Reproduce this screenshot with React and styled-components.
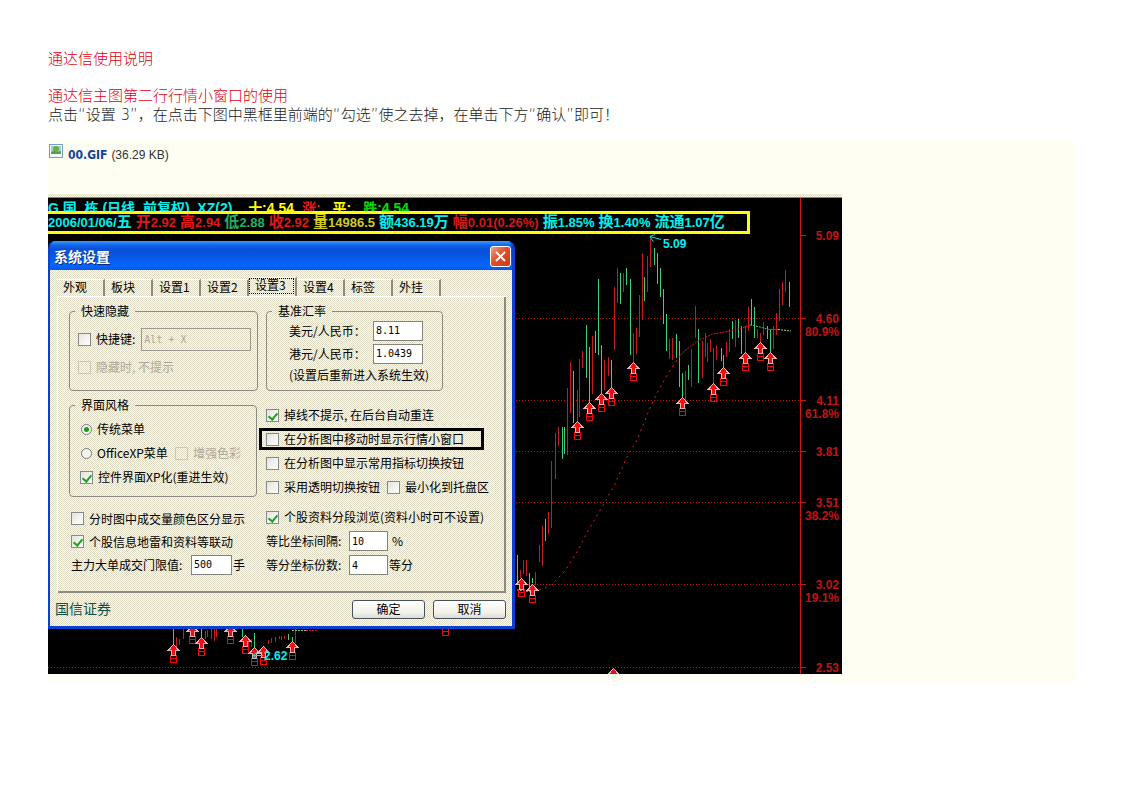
import { useState } from "react";
import styled, { createGlobalStyle, css } from "styled-components";

const GlobalStyle = createGlobalStyle`
  * {
    box-sizing: border-box;
  }

  body {
    margin: 0;
    background: #fff;
    font-family: "Noto Sans CJK SC", sans-serif;
    font-size: 12px;
  }

  input,
  button {
    margin: 0;
    font: inherit;
  }
`;

const dither = css`
  background: repeating-conic-gradient(#fbfaf4 0 25%, #dfdbc5 0 50%) 0 0 / 2px
    2px;
`;

const Page = styled.main`
  padding: 48px 46px 48px 48px;
`;

const Title = styled.h1`
  margin: 0 0 17px;
  font-size: 15px;
  font-weight: 300;
  line-height: 20px;
  color: #e00010;
`;

const Subtitle = styled.h2`
  margin: 0;
  font-size: 15px;
  font-weight: 300;
  line-height: 20px;
  color: #e00010;
`;

const Paragraph = styled.p`
  margin: 0 0 17px;
  font-family: "DejaVu Sans", "Noto Sans CJK SC", sans-serif;
  font-size: 15px;
  font-weight: 300;
  line-height: 20px;
  color: #222;
`;

const Attachment = styled.section`
  padding-bottom: 8px;
  background: #fefff2;
`;

const FileRow = styled.div`
  display: flex;
  gap: 4px;
  height: 52px;
  padding: 2px 0 0 1px;
  font-family: "Liberation Sans", sans-serif;
  font-size: 12px;
  line-height: 22px;
  color: #333;
`;

const FileLink = styled.a`
  margin-left: 1px;
  font-family: "DejaVu Sans Condensed", "DejaVu Sans", sans-serif;
  font-size: 12px;
  font-weight: bold;
  color: #10449a;
  text-decoration: none;
`;

// chart and window share one grid cell so that the window lies on the chart
const Screen = styled.div`
  display: grid;
  width: 100%;
  max-width: 794px;
  overflow: hidden;
  background: #000;

  > * {
    grid-area: 1 / 1;
    min-width: 0;
  }
`;

const ChartSvg = styled.svg`
  display: block;
  font-family: "Liberation Sans", sans-serif;
  font-size: 12px;
  font-weight: bold;
`;

const Overlay = styled.div`
  padding-bottom: 45px;
`;

const TopStrip = styled.div`
  height: 4px;
  border-bottom: 1px solid #8a8a80;
  ${dither}
`;

const QuoteText = styled.div`
  display: flex;
  white-space: nowrap;
  font-family: "Liberation Sans", "Noto Sans CJK SC", sans-serif;
  font-size: 13px;
  font-weight: bold;
`;

const HeadLine = styled(QuoteText)`
  gap: 8px;
  height: 13px;
  overflow: hidden;
  font-size: 14px;
  line-height: 20px;
`;

const QuoteFrame = styled(QuoteText)`
  gap: 4px;
  width: 702px;
  max-width: 100%;
  height: 23px;
  border: 3px solid #ff0;
  border-left: none;
  background: #000;
  line-height: 15px;
`;

const Quote = styled.span`
  color: ${(props) => props.$color};
  white-space: pre;
`;

const Han = styled.span`
  font-size: 15px;
`;

const Window = styled.section`
  width: 467px;
  max-width: 100%;
  margin-top: 7px;
  border: solid #0a3fd0;
  border-width: 0 3px 3px 2px;
  border-radius: 7px 7px 0 0;
  background: #0a3fd0;
  overflow: hidden;
  color: #000;
`;

const TitleBar = styled.header`
  display: flex;
  align-items: center;
  justify-content: space-between;
  height: 29px;
  padding: 1px 1px 0 4px;
  background: linear-gradient(
    #3c98ff 0,
    #1268ee 4px,
    #0a4fd8 8px,
    #0858e4 16px,
    #0566fb 24px,
    #0558e8 29px
  );
`;

const WindowTitle = styled.h3`
  margin: 0;
  font-size: 14px;
  line-height: 18px;
  color: #fff;
  text-shadow: 1px 1px #0a2a80;
`;

const CloseButton = styled.button`
  display: flex;
  align-items: center;
  justify-content: center;
  width: 21px;
  height: 21px;
  padding: 0;
  border: 1px solid #fff;
  border-radius: 3px;
  background: linear-gradient(135deg, #f0a088, #e0502c 45%, #c43c14);
`;

const WindowBody = styled.div`
  padding: 7px 6px 0 7px;
  ${dither}
`;

const TabList = styled.div`
  display: flex;
  align-items: flex-end;
`;

const Tab = styled.button`
  width: 48px;
  height: ${(props) => (props.$active ? "19px" : "17px")};
  padding: 0 1px 2px 0;
  border: none;
  border-top: 1px solid #fff;
  border-right: 2px solid #8d8b80;
  background: none;
  text-align: left;
  line-height: 14px;

  span {
    display: block;
    height: 16px;
    padding-left: 5px;
    border: 1px dotted ${(props) => (props.$active ? "#000" : "transparent")};
    line-height: 12px;
  }
`;

const Sheet = styled.form`
  display: flex;
  gap: 2px;
  padding: 6px 0 16px 11px;
  border: solid #fff;
  border-width: 1px 0 0 1px;
  box-shadow: inset -2px -2px #8d8b80;
`;

const LeftColumn = styled.div`
  width: 188px;
`;

const RightColumn = styled.div`
  flex: 1;
`;

const Group = styled.fieldset`
  width: ${(props) => props.$width};
  height: ${(props) => props.$height};
  margin: ${(props) => props.$margin || "0"};
  padding: 0 5px 0 ${(props) => props.$indent || "10px"};
  border: 1px solid #8d8b80;
  border-radius: 4px;
`;

const Legend = styled.legend`
  margin-left: ${(props) => props.$shift || "-5px"};
  padding: 0 6px;
  line-height: 16px;
`;

const Row = styled.div`
  display: flex;
  align-items: center;
  height: ${(props) => props.$height || "24px"};
  padding-left: ${(props) => props.$indent || "0"};
  line-height: 16px;
  white-space: nowrap;
`;

const LowerRows = styled.div`
  padding: 10px 0 0 2px;
`;

const CheckRows = styled.div`
  padding: ${(props) => props.$top} 0 0;
`;

const Marked = styled.div`
  display: flex;
  align-items: center;
  width: 225px;
  height: 22px;
  margin: 1px 0;
  padding-left: 4px;
  border: 3px solid #000;
`;

const CheckLabel = styled.label`
  display: flex;
  align-items: center;
  gap: 5px;
  color: ${(props) => (props.$disabled ? "#aca899" : "#000")};
  white-space: nowrap;
  line-height: 16px;

  & + & {
    margin-left: 7px;
  }
`;

const CheckBox = styled.input`
  appearance: none;
  flex: none;
  width: 13px;
  height: 13px;
  border: 1px solid #858a8c;
  background: linear-gradient(135deg, #e4e4dc, #fff);

  &:checked::after {
    content: "";
    display: block;
    width: 4px;
    height: 7px;
    margin: 1px 0 0 3px;
    border: solid #21a121;
    border-width: 0 2px 2px 0;
    transform: rotate(40deg);
  }

  &:disabled {
    border-color: #cac8bb;
    background: none;
  }
`;

const Radio = styled.input`
  appearance: none;
  flex: none;
  width: 11px;
  height: 11px;
  margin: 0 0 0 1px;
  border: 1px solid #777c7c;
  border-radius: 50%;
  background: #f4f4ec;

  &:checked::after {
    content: "";
    display: block;
    width: 5px;
    height: 5px;
    margin: 2px;
    border-radius: 50%;
    background: #1a9a1a;
  }
`;

const FieldLabel = styled.label`
  width: ${(props) => props.$width};
`;

const TextBox = styled.input`
  width: ${(props) => props.$width};
  height: 20px;
  margin-right: ${(props) => props.$after || "1px"};
  padding: 0 0 0 2px;
  border: 1px solid #85857c;
  border-radius: 0;
  background: #fff;
  font-family: "DejaVu Sans Mono", monospace;
  font-size: 10px;

  &:disabled {
    height: 23px;
    margin-left: 6px;
    border: 1px solid #9d9b90;
    background: none;
    color: #aca899;
  }
`;

const Footer = styled.footer`
  display: flex;
  align-items: flex-start;
  gap: 8px;
  height: 33px;
  padding-top: 7px;
`;

const Broker = styled.span`
  flex: 1;
  margin-left: -2px;
  font-size: 14px;
  line-height: 16px;
  color: #0c524c;
`;

const PushButton = styled.button`
  width: 73px;
  height: 19px;
  padding: 0 0 2px;
  border: 1px solid #45525c;
  border-radius: 3px;
  background: linear-gradient(#fff, #f2f1ea 70%, #dddbd2);
  line-height: 15px;
`;

const RED = "#c41c1c";
const GREEN = "#3ecf80";

// x, high, low
const falling = [
  [125, 435, 450], [153, 435, 443], [194, 435, 443], [206, 439, 454],
  [240, 440, 446], [244, 443, 448], [469, 361, 388], [481, 379, 393],
  [484, 384, 389], [497, 325, 347], [514, 233, 265], [516, 233, 260],
  [525, 177, 229], [538, 131, 184], [541, 153, 208], [547, 137, 159],
  [550, 85, 161], [553, 151, 199], [563, 166, 194], [572, 79, 110],
  [578, 74, 91], [582, 85, 161], [596, 83, 107], [606, 54, 71],
  [609, 59, 90], [612, 74, 103], [615, 95, 130], [618, 120, 157],
  [628, 140, 164], [631, 147, 193], [634, 179, 203], [640, 171, 186],
  [650, 135, 189], [673, 154, 167], [675, 161, 173], [684, 127, 145],
  [690, 125, 144], [693, 132, 160], [703, 105, 131], [706, 113, 144],
  [719, 132, 145], [722, 135, 158], [741, 88, 113],
];

const rising = [
  [128, 443, 454], [131, 445, 451], [135, 435, 445], [157, 437, 445],
  [159, 436, 443], [163, 435, 445], [166, 435, 447], [168, 435, 443],
  [200, 444, 455], [203, 445, 453], [220, 446, 450], [223, 444, 449],
  [227, 443, 448], [231, 442, 445], [233, 442, 446], [236, 442, 445],
  [247, 435, 449], [472, 376, 384], [475, 366, 380], [478, 366, 382],
  [487, 378, 391], [491, 351, 368], [494, 332, 372], [500, 318, 340],
  [503, 267, 334], [507, 239, 285], [510, 233, 252], [519, 194, 261],
  [522, 168, 219], [529, 196, 228], [531, 165, 223], [534, 157, 174],
  [544, 142, 200], [556, 166, 196], [560, 163, 182], [566, 93, 156],
  [569, 74, 109], [575, 79, 98], [585, 139, 168], [588, 134, 160],
  [591, 101, 143], [594, 59, 126], [599, 62, 98], [602, 45, 73],
  [621, 145, 165], [624, 144, 166], [637, 177, 206], [643, 155, 193],
  [647, 112, 144], [654, 147, 184], [657, 139, 163], [659, 149, 168],
  [662, 145, 158], [665, 154, 189], [668, 152, 166], [678, 148, 163],
  [681, 135, 158], [687, 126, 153], [697, 132, 158], [700, 113, 137],
  [709, 135, 144], [712, 139, 148], [715, 128, 141], [725, 132, 155],
  [728, 119, 141], [731, 95, 127], [734, 88, 111], [737, 76, 98],
];

const buys = [
  [125, 450], [144, 431], [153, 443], [182, 431], [197, 441], [206, 453],
  [215, 452], [244, 447], [397, 423], [473, 384], [484, 390], [529, 227],
  [541, 208], [553, 199], [563, 193], [585, 168], [634, 203], [665, 189],
  [675, 173], [697, 158], [712, 148], [722, 158], [565, 474],
];

const levels = [
  { y: 41, price: "5.09", noLine: true },
  { y: 124, price: "4.60", percent: "80.9%" },
  { y: 206, price: "4.11", percent: "61.8%" },
  { y: 257, price: "3.81" },
  { y: 308, price: "3.51", percent: "38.2%" },
  { y: 390, price: "3.02", percent: "19.1%" },
  { y: 473, price: "2.53" },
];

const headline = [
  ["G 国  栋 (日线  前复权)  XZ(2)  ", "#00f0f0"],
  ["十:4.54", "#ff0"],
  ["涨:.", "#f01818"],
  ["平:.", "#ff0"],
  ["跌:4.54", "#00e000"],
];

const quotes = [
  { value: "2006/01/06/", unit: "五", color: "#00f0f0" },
  { name: "开", value: "2.92", color: "#e01818" },
  { name: "高", value: "2.94", color: "#e01818" },
  { name: "低", value: "2.88", color: "#22b066" },
  { name: "收", value: "2.92", color: "#e01818" },
  { name: "量", value: "14986.5", color: "#d2cc20" },
  { name: "额", value: "436.19", unit: "万", color: "#00f0f0" },
  { name: "幅", value: "0.01(0.26%)", color: "#d01818" },
  { name: "振", value: "1.85%", color: "#00f0f0" },
  { name: "换", value: "1.40%", color: "#00f0f0" },
  { name: "流通", value: "1.07", unit: "亿", color: "#00f0f0" },
];

const tabs = ["外观", "板块", "设置1", "设置2", "设置3", "设置4", "标签", "外挂"];

const BuyMark = ({ x, y }) => (
  <g transform={`translate(${x} ${y})`}>
    <path
      d="M-2.5 11.5 H3.5 V18.5 H-2.5 Z M-2.5 14.5 H3.5"
      fill="none"
      stroke="#f00808"
    />
    <path
      d="M.5 .5 L5.5 6 H2.5 V11 H-1.5 V6 H-4.5 Z"
      fill="#f01010"
      stroke="#f0b0b0"
    />
  </g>
);

const Chart = () => (
  <ChartSvg
    width="100%"
    height="480"
    viewBox="0 0 794 480"
    preserveAspectRatio="xMinYMin slice"
    shapeRendering="crispEdges"
    aria-hidden="true"
  >
    <rect x="752" y="4" width="1" height="476" fill="#d01414" />
    {levels.map((level) => (
      <g key={level.price} fill="#c01414">
        {!level.noLine && (
          <path
            d={`M0 ${level.y}.5 H752`}
            stroke="#c41414"
            strokeDasharray="1 2"
          />
        )}
        <path d={`M753 ${level.y}.5 H758`} stroke="#d01414" />
        <text x="791" y={level.y + 5} textAnchor="end">
          {level.price}
        </text>
        {level.percent && (
          <text x="791" y={level.y + 18} textAnchor="end">
            {level.percent}
          </text>
        )}
      </g>
    ))}
    {rising.map(([x, high, low]) => (
      <rect key={x} x={x} y={high} width="1" height={low - high} fill={RED} />
    ))}
    {falling.map(([x, high, low]) => (
      <rect key={x} x={x} y={high} width="1" height={low - high} fill={GREEN} />
    ))}
    <g fill="none" shapeRendering="auto">
      <path
        d="M491 396 Q499 394 504 390 L517 377 L529 358 L541 335 L557 308 L566 292 L579 263 L589 246 L602 214 L610 197 L621 178 L631 163"
        stroke="#e02020"
        strokeDasharray="2 4"
      />
      <path
        d="M631 163 Q644 148 665 140 L682 137 L694 134 L702 131"
        stroke="#e02020"
        strokeDasharray="2 1"
      />
      <path d="M702 131 L712 133 L719 135" stroke="#30d030" strokeDasharray="2 1" />
      <path d="M719 135.5 H730" stroke="#d02020" />
      <path d="M730 135.5 L743 137" stroke="#a0d830" strokeDasharray="2 1" />
      <path d="M469 396 L484 398" stroke="#60d030" strokeDasharray="2 1" />
      <path d="M244 436.5 H258" stroke="#80d030" strokeDasharray="2 1" />
      <path d="M258 436.5 H269" stroke="#d02020" strokeDasharray="2 1" />
    </g>
    {buys.map(([x, y]) => (
      <BuyMark key={x} x={x} y={y} />
    ))}
    <path
      d="M602 42.5 L613 45.5 M602 42.5 L607 40.5 M602 42.5 L605 47.5 M205 461.5 H215 M205 461.5 L209 458.5 M205 461.5 L209 464.5"
      fill="none"
      stroke="#00e8e8"
      shapeRendering="auto"
    />
    <text x="615" y="54" fill="#00f0f0">
      5.09
    </text>
    <text x="216" y="466" fill="#00f0f0">
      2.62
    </text>
  </ChartSvg>
);

// eslint-disable-next-line react/prop-types
const Check = ({ label, checked, disabled }) => (
  <CheckLabel $disabled={disabled}>
    <CheckBox type="checkbox" defaultChecked={checked} disabled={disabled} />
    {label}
  </CheckLabel>
);

const SettingsWindow = () => {
  const [active, setActive] = useState("设置3");

  return (
    <Window aria-label="系统设置">
      <TitleBar>
        <WindowTitle>系统设置</WindowTitle>
        <CloseButton type="button" aria-label="关闭">
          <svg width="13" height="13" viewBox="0 0 13 13">
            <path d="M2 2 L11 11 M11 2 L2 11" stroke="#fff" strokeWidth="2" />
          </svg>
        </CloseButton>
      </TitleBar>
      <WindowBody>
        <TabList role="tablist">
          {tabs.map((tab) => (
            <Tab
              key={tab}
              type="button"
              role="tab"
              aria-selected={tab === active}
              $active={tab === active}
              onClick={() => setActive(tab)}
            >
              <span>{tab}</span>
            </Tab>
          ))}
        </TabList>
        <Sheet>
          <LeftColumn>
            <Group $width="188px" $height="88px" $indent="8px">
              <Legend $shift="-3px">快速隐藏</Legend>
              <CheckRows $top="8px">
                <Row>
                  <Check label="快捷键:" />
                  <TextBox
                    $width="110px"
                    defaultValue="Alt + X"
                    aria-label="快捷键"
                    disabled
                  />
                </Row>
                <Row $height="32px">
                  <Check label="隐藏时, 不提示" disabled />
                </Row>
              </CheckRows>
            </Group>
            <Group $width="188px" $height="100px" $margin="6px 0 0">
              <Legend>界面风格</Legend>
              <CheckRows $top="4px">
                <Row>
                  <CheckLabel>
                    <Radio type="radio" name="style" defaultChecked />
                    传统菜单
                  </CheckLabel>
                </Row>
                <Row>
                  <CheckLabel>
                    <Radio type="radio" name="style" />
                    OfficeXP菜单
                  </CheckLabel>
                  <Check label="增强色彩" disabled />
                </Row>
                <Row>
                  <Check label="控件界面XP化(重进生效)" checked />
                </Row>
              </CheckRows>
            </Group>
            <LowerRows>
              <Row $height="23px">
                <Check label="分时图中成交量颜色区分显示" />
              </Row>
              <Row $height="23px">
                <Check label="个股信息地雷和资料等联动" checked />
              </Row>
              <Row $height="23px">
                <FieldLabel htmlFor="limit" $width="120px">
                  主力大单成交门限值:
                </FieldLabel>
                <TextBox id="limit" $width="41px" defaultValue="500" />手
              </Row>
            </LowerRows>
          </LeftColumn>
          <RightColumn>
            <Group
              $width="177px"
              $height="88px"
              $margin="0 0 0 7px"
              $indent="22px"
            >
              <Legend $shift="-17px">基准汇率</Legend>
              <Row $height="23px">
                <FieldLabel htmlFor="usd" $width="84px">
                  美元/人民币：
                </FieldLabel>
                <TextBox id="usd" $width="50px" defaultValue="8.11" />
              </Row>
              <Row $height="23px">
                <FieldLabel htmlFor="hkd" $width="84px">
                  港元/人民币：
                </FieldLabel>
                <TextBox id="hkd" $width="50px" defaultValue="1.0439" />
              </Row>
              <Row $height="20px">(设置后重新进入系统生效)</Row>
            </Group>
            <CheckRows $top="12px">
              <Row $indent="7px">
                <Check label="掉线不提示, 在后台自动重连" checked />
              </Row>
              <Marked>
                <Check label="在分析图中移动时显示行情小窗口" />
              </Marked>
              <Row $indent="7px">
                <Check label="在分析图中显示常用指标切换按钮" />
              </Row>
              <Row $indent="7px">
                <Check label="采用透明切换按钮" />
                <Check label="最小化到托盘区" />
              </Row>
            </CheckRows>
            <CheckRows $top="6px">
              <Row $indent="7px">
                <Check label="个股资料分段浏览(资料小时可不设置)" checked />
              </Row>
              <Row $indent="7px">
                <FieldLabel htmlFor="gap" $width="83px">
                  等比坐标间隔:
                </FieldLabel>
                <TextBox
                  id="gap"
                  $width="39px"
                  $after="4px"
                  defaultValue="10"
                />
                %
              </Row>
              <Row $indent="7px">
                <FieldLabel htmlFor="parts" $width="83px">
                  等分坐标份数:
                </FieldLabel>
                <TextBox id="parts" $width="39px" defaultValue="4" />
                等分
              </Row>
            </CheckRows>
          </RightColumn>
        </Sheet>
        <Footer>
          <Broker>国信证券</Broker>
          <PushButton type="button">确定</PushButton>
          <PushButton type="button">取消</PushButton>
        </Footer>
      </WindowBody>
    </Window>
  );
};

const PictureIcon = () => (
  <svg width="14" height="14" viewBox="0 0 14 14" aria-hidden="true">
    <rect x=".5" y=".5" width="13" height="13" fill="#f4faff" stroke="#7c9cbc" />
    <rect x="2" y="2" width="10" height="8" fill="#a4cce0" />
    <circle cx="7" cy="5" r="3" fill="#68b040" />
    <path d="M2 10 V8 L5 7 L8 8 L12 7 V10 Z" fill="#5c9c48" />
  </svg>
);

const App = () => {
  return (
    <>
      <GlobalStyle />
      <Page>
        <Title>通达信使用说明</Title>
        <Subtitle>通达信主图第二行行情小窗口的使用</Subtitle>
        <Paragraph>
          点击“设置 3”，在点击下图中黑框里前端的“勾选”使之去掉，在单击下方“确认”即可！
        </Paragraph>
        <Attachment>
          <FileRow>
            <PictureIcon />
            <FileLink href="#gif">00.GIF</FileLink>
            <span>(36.29 KB)</span>
          </FileRow>
          <Screen id="gif">
            <Chart />
            <Overlay>
              <TopStrip />
              <HeadLine>
                {headline.map(([text, color]) => (
                  <Quote key={text} $color={color}>
                    {text}
                  </Quote>
                ))}
              </HeadLine>
              <QuoteFrame>
                {quotes.map((quote, index) => (
                  <Quote key={index} $color={quote.color}>
                    {quote.name && <Han>{quote.name}</Han>}
                    {quote.value}
                    {quote.unit && <Han>{quote.unit}</Han>}
                  </Quote>
                ))}
              </QuoteFrame>
              <SettingsWindow />
            </Overlay>
          </Screen>
        </Attachment>
      </Page>
    </>
  );
};

export default App;
